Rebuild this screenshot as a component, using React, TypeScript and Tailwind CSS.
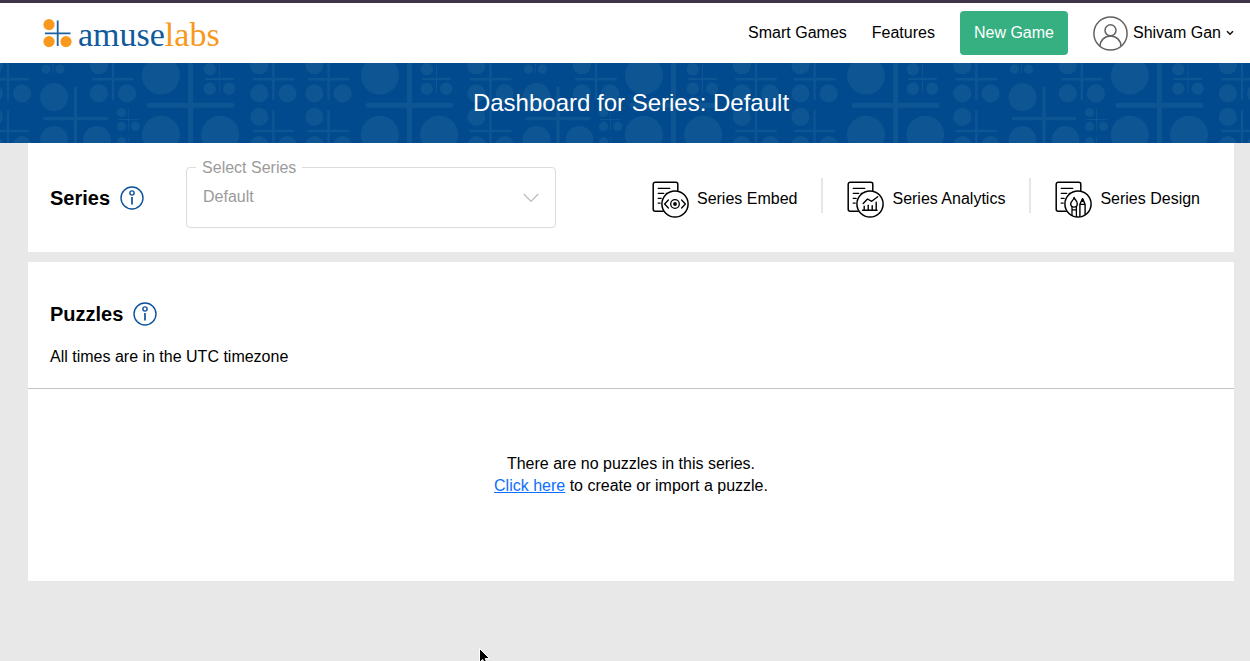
import type { ReactNode } from "react";

type MotifKind = "large" | "medium" | "small" | "mini" | "tiny";

const MOTIFS: Record<MotifKind, { offset: number; r: number; arm: number; h: number; v: number }> = {
  large: { offset: 29.6, r: 19, arm: 44, h: 5, v: 5 },
  medium: { offset: 21.5, r: 14, arm: 32.5, h: 3.4, v: 3.4 },
  small: { offset: 14.1, r: 9.1, arm: 21, h: 2.4, v: 2.4 },
  mini: { offset: 9.7, r: 6.2, arm: 14.5, h: 1.8, v: 1 },
  tiny: { offset: 7, r: 4.6, arm: 10.7, h: 1, v: 1 },
};

const PLACED: [MotifKind, number, number][] = [
  ["small", 8, 16.3], ["small", 8, 68],
  ["tiny", 53, -0.8], ["medium", 75.5, 55.6], ["small", 113, 16.3],
  ["tiny", 128.4, 56.4], ["tiny", 128.4, 85.7],
  ["large", 190.5, 42.2], ["mini", 219.4, 16],
  ["small", 273.4, 16.3], ["small", 273.4, 68],
  ["small", 328.5, 16.3], ["small", 328.5, 68],
  ["large", 409.5, 42.2], ["mini", 436.5, 16],
  ["small", 490.5, 16.3], ["small", 490.5, 68],
  ["tiny", 535.5, -0.8], ["medium", 558, 55.6], ["small", 596, 16.3],
  ["tiny", 610.6, 56.4], ["tiny", 610.6, 85.7],
  ["large", 673.5, 42.2], ["mini", 702.5, 16],
  ["small", 756, 16.3], ["small", 756, 68],
  ["small", 814.6, 16.3], ["small", 814.6, 68],
  ["large", 895.6, 42.2], ["mini", 922.5, 16],
  ["small", 976.4, 16.3], ["small", 976.4, 68],
  ["tiny", 1021.5, -0.8], ["medium", 1044, 55.6], ["small", 1081.8, 16.3],
  ["tiny", 1096.5, 56.4], ["tiny", 1096.5, 85.7],
  ["large", 1159.4, 42.2], ["mini", 1188, 16],
  ["small", 1242, 16.3], ["small", 1242, 68],
];

function Motif({ kind, x, y }: { kind: MotifKind; x: number; y: number }) {
  const { offset, r, arm, h, v } = MOTIFS[kind];
  return (
    <g transform={`translate(${x} ${y})`}>
      <circle cx={-offset} cy={-offset} r={r} />
      <circle cx={-offset} cy={offset} r={r} />
      <circle cx={offset} cy={offset} r={r} />
      <rect x={-arm} y={-h / 2} width={arm * 2} height={h} rx={h / 2} />
      <rect x={-v / 2} y={-arm} width={v} height={arm * 2} rx={v / 2} />
    </g>
  );
}

function BannerPattern() {
  return (
    <svg className="absolute inset-0 h-full w-full" fill="#0e5593" aria-hidden="true">
      {PLACED.map(([kind, x, y]) => (
        <Motif key={`${x}-${y}`} kind={kind} x={x} y={y} />
      ))}
    </svg>
  );
}

function Logo() {
  return (
    <a href="#" className="flex items-center gap-1.5">
      <svg width="29" height="29" viewBox="0 0 29 29" aria-hidden="true">
        <g fill="#f8991d">
          <circle cx="6" cy="5.6" r="5.6" />
          <circle cx="6" cy="22.6" r="5.6" />
          <circle cx="23" cy="22.6" r="5.6" />
        </g>
        <path d="M14.7 1.5v25.5M2 14.3h25.5" stroke="#1c62a2" strokeWidth="1.8" />
      </svg>
      <span className="mt-1 font-['Liberation_Serif',serif] text-[34px] leading-10 text-[#0f5a9c]">
        amuse<span className="text-[#f8991d]">labs</span>
      </span>
    </a>
  );
}

function InfoButton({ label }: { label: string }) {
  return (
    <button type="button" aria-label={label} className="size-6">
      <svg width="24" height="24" viewBox="0 0 24 24" fill="none" stroke="#0b539b" strokeWidth="1.4">
        <circle cx="12" cy="12" r="11" />
        <circle cx="12" cy="7" r="2.1" />
        <path d="M12 11v7.6" strokeWidth="1.7" />
      </svg>
    </button>
  );
}

function DocIcon({ children }: { children: ReactNode }) {
  return (
    <svg width="37" height="37" viewBox="0 0 37 37" fill="none" stroke="#000" strokeWidth="1.5" strokeLinecap="round" strokeLinejoin="round" aria-hidden="true">
      <path d="M11 30.3H3.2a2 2 0 0 1-2-2V3.2a2 2 0 0 1 2-2h20.6a2 2 0 0 1 2 2V9.5" />
      <path d="M6.2 7.3h11.6M6.2 12.3h5.6M6.2 17.3h3M6.2 22.1h2M14.2 12.3h1" strokeWidth="1.3" />
      <circle cx="23" cy="23" r="13.1" />
      {children}
    </svg>
  );
}

function EmbedIcon() {
  return (
    <DocIcon>
      <path d="m16.4 19-3.8 4 3.8 4M29.6 19l3.8 4-3.8 4" strokeWidth="1.3" />
      <circle cx="23" cy="23" r="4.3" strokeWidth="1.3" />
      <circle cx="23" cy="23" r="1.9" fill="#000" stroke="none" />
    </DocIcon>
  );
}

function AnalyticsIcon() {
  return (
    <DocIcon>
      <path d="m16.2 22.6 4.3-4.6 4.2 2.3 6-4.6" strokeWidth="1.4" />
      <path d="M15.5 29.3h14.500M17.200 29v-3.800M21.200 29v-4.800M25.200 29v-4.200M29.200 29v-7.800" strokeWidth="1.4" />
    </DocIcon>
  );
}

function DesignIcon() {
  return (
    <DocIcon>
      <path d="M19 16.5c.4 2.2 3.300 3 3.300 6.200 0 2-1.200 3.400-3.300 3.400s-3.300-1.300-3.300-3.300c0-2.500 2.900-3.300 3.300-6.300Z" strokeWidth="1.4" />
      <path d="M17 26v8.2M21.4 26v9.4M17 28.8h4.4" strokeWidth="1.3" />
      <path d="m27.500 17.800-2.600 5.400v12M27.500 17.800l2.600 5.400v10M24.900 23.400h5.200" strokeWidth="1.4" />
      <path d="m27.500 17.800-1.200 2.700h2.400Z" fill="#000" strokeWidth="1" />
    </DocIcon>
  );
}

function SeriesAction({ icon, children }: { icon: ReactNode; children: ReactNode }) {
  return (
    <a href="#" className="flex items-center gap-2">
      {icon}
      {children}
    </a>
  );
}

function Divider() {
  return <span className="mb-2 h-[35px] w-0.5 bg-[#e6e6e6]" aria-hidden="true" />;
}

function Header() {
  return (
    <header className="flex h-[63px] items-center justify-between border-t-[3px] border-[#403449] bg-white pr-4 pl-[43px]">
      <Logo />
      <nav className="flex items-center gap-[25px]">
        <a href="#">Smart Games</a>
        <a href="#">Features</a>
        <button type="button" className="h-11 rounded bg-[#36b080] px-3.5 text-white">
          New Game
        </button>
        <button type="button" className="flex items-center gap-[5px]">
          <svg width="35" height="35" viewBox="0 0 35 35" fill="none" stroke="#626262" strokeWidth="1.5" aria-hidden="true">
            <circle cx="17.5" cy="17.5" r="16.6" />
            <circle cx="17.5" cy="14.3" r="5.5" />
            <path d="M7 30.3c.2-6 4.6-10.3 10.5-10.3S27.8 24.3 28 30.3" />
          </svg>
          <span className="whitespace-nowrap">Shivam Gan</span>
          <svg width="8" height="6" viewBox="0 0 8 6" fill="none" stroke="#111" strokeWidth="1.5" aria-hidden="true">
            <path d="m1 1.2 3 3 3-3" />
          </svg>
        </button>
      </nav>
    </header>
  );
}

function SeriesCard() {
  return (
    <section className="flex h-[109px] items-center bg-white pr-[34px] pl-[22px]">
      <h2 className="mr-2.5 text-xl font-bold">Series</h2>
      <InfoButton label="About series" />
      <fieldset className="relative mb-[11px] ml-[42px] h-[71px] w-[370px] rounded border border-[#dcdcdc] text-[#9b9b9b]">
        <legend className="ml-[9px] px-1.5 leading-[22px]">
          <label htmlFor="series">Select Series</label>
        </legend>
        <select id="series" className="h-9 w-full appearance-none bg-transparent px-4 outline-none" defaultValue="default">
          <option value="default">Default</option>
        </select>
        <svg className="pointer-events-none absolute top-3.5 right-4" width="16" height="10" viewBox="0 0 16 10" fill="none" stroke="#bdbdbd" strokeWidth="1.3" aria-hidden="true">
          <path d="m.8 1 7.2 7.4L15.2 1" />
        </svg>
      </fieldset>
      <div className="ml-auto flex items-center gap-6 pt-[3px]">
        <SeriesAction icon={<EmbedIcon />}>Series Embed</SeriesAction>
        <Divider />
        <SeriesAction icon={<AnalyticsIcon />}>Series Analytics</SeriesAction>
        <Divider />
        <SeriesAction icon={<DesignIcon />}>Series Design</SeriesAction>
      </div>
    </section>
  );
}

function PuzzlesCard() {
  return (
    <section className="mt-2.5 bg-white">
      <div className="border-b border-[#c4c4c4] px-[22px] pt-9 pb-5">
        <div className="flex items-center gap-2.5">
          <h2 className="text-xl leading-8 font-bold">Puzzles</h2>
          <InfoButton label="About puzzles" />
        </div>
        <p className="mt-4 leading-[22px]">All times are in the UTC timezone</p>
      </div>
      <p className="pt-16 pb-[84px] text-center leading-[22px]">
        There are no puzzles in this series.
        <br />
        <a href="#" className="text-[#0d6efd] underline">Click here</a> to create or import a puzzle.
      </p>
    </section>
  );
}

export default function App() {
  return (
    <div className="relative min-h-screen overflow-hidden bg-[#e8e8e8] font-['Liberation_Sans',Arial,sans-serif] text-base text-black">
      <Header />
      <div className="relative flex h-20 items-center justify-center overflow-hidden bg-[#004a8d] pr-4 pl-7">
        <BannerPattern />
        <h1 className="relative text-2xl text-white">Dashboard for Series: Default</h1>
      </div>
      <main className="pr-4 pl-7">
        <SeriesCard />
        <PuzzlesCard />
      </main>
      <svg className="pointer-events-none absolute top-[647px] left-[478px]" width="14" height="20" viewBox="0 0 14 20" aria-hidden="true">
        <path d="M1.5 1.5v14l3.2-3 2.2 5.3 2.5-1-2.2-5.2h4.4Z" fill="#000" stroke="#fff" strokeWidth="1" />
      </svg>
    </div>
  );
}
